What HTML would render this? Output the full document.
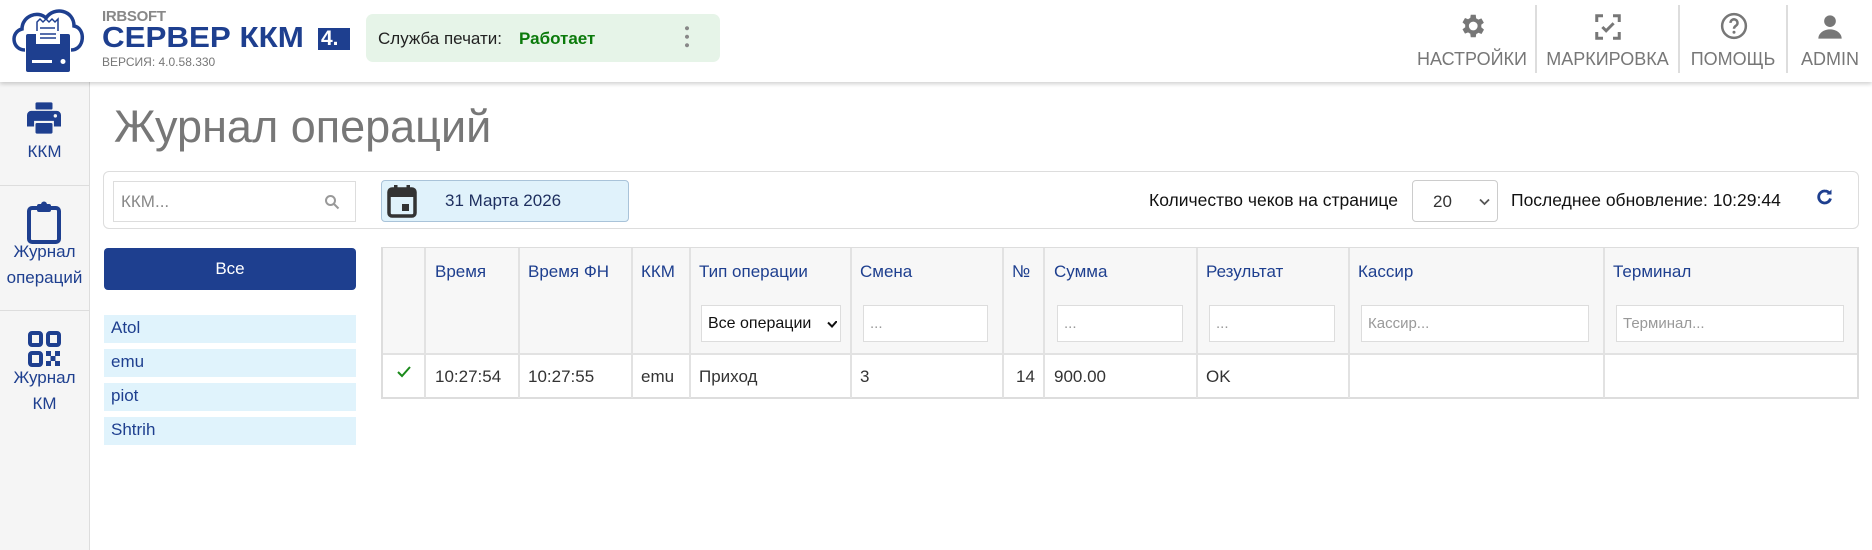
<!DOCTYPE html>
<html><head><meta charset="utf-8"><style>
*{box-sizing:border-box;margin:0;padding:0}
body{width:1872px;height:550px;overflow:hidden;background:#fff;font-family:"Liberation Sans",Arial,sans-serif;position:relative;color:#222}
.abs{position:absolute}
.hdr{left:0;top:0;width:1872px;height:82px;background:#fff;box-shadow:0 2px 4px rgba(0,0,0,.18);z-index:2}
.nav{position:absolute;top:0;height:82px;text-align:center;color:#777;font-size:18px}
.nav .lbl{position:absolute;left:0;right:0;top:49px}
.sep{position:absolute;top:5px;width:2px;height:68px;background:#ddd}
.side{left:0;top:82px;width:90px;height:468px;background:#f5f5f5;border-right:1px solid #ddd}
.sl{position:absolute;left:0;width:89px;text-align:center;color:#1e3f8f;font-size:17px;line-height:26px}
.hr{position:absolute;left:0;width:89px;height:1px;background:#ddd}
.tbl{left:381px;top:247px;width:1478px;height:152px;border:2px solid #ddd;border-top:1px solid #ddd}
.th{position:absolute;top:0;height:106px;background:#f7f7f7}
.vl{position:absolute;top:0;height:150px;width:2px;background:#e2e2e2}
.hl{color:#1e3f8f;font-size:17px;position:absolute;top:14px}
.td{position:absolute;top:119px;font-size:17px;color:#333}
.inp{position:absolute;top:57px;height:37px;border:1px solid #ddd;background:#fff;font-size:15px;color:#999;padding:9px 6px}
.li{left:104px;width:252px;height:28px;background:#e0f3fc;color:#1e3f8f;font-size:17px;padding:3px 7px}
</style></head><body>
<div class="abs hdr">
 <svg class="abs" style="left:8px;top:4px" width="78" height="70" viewBox="0 0 78 70">
  <path d="M17 46 C4 46 2 28 14 25 C14 12 30 6 38 14 C46 2 66 6 66 22 C78 24 77 46 63 46" fill="none" stroke="#1e3f8f" stroke-width="3.5"/>
  <path d="M29 18 l3 -3 l3 3 l3 -3 l3 3 l3 -3 l3 3 l3 -3 v25 h-21z" fill="#fff" stroke="#1e3f8f" stroke-width="1.5"/>
  <path d="M32 24h15M32 28h15M32 32h15M32 36h15" stroke="#1e3f8f" stroke-width="1.6"/>
  <rect x="18" y="30" width="44" height="38" rx="2" fill="#1e3f8f"/>
  <rect x="28" y="27" width="24" height="13" fill="#fff"/>
  <path d="M32 30h16M32 34h16" stroke="#1e3f8f" stroke-width="1.6"/>
  <rect x="24" y="56" width="20" height="3" fill="#fff"/><circle cx="55" cy="57.5" r="2.5" fill="#fff"/>
 </svg>
 <div class="abs" style="left:102px;top:8px;font-size:15px;font-weight:bold;color:#888;letter-spacing:-.3px">IRBSOFT</div>
 <div class="abs" style="left:102px;top:22px;font-size:29px;color:#1e3f8f;font-weight:bold;transform:scaleX(1.08);transform-origin:left">СЕРВЕР ККМ</div>
 <div class="abs" style="left:318px;top:28px;width:32px;height:22px;background:#1e3f8f;color:#fff;font-weight:bold;font-size:21px;line-height:22px;padding-left:3px">4.</div>
 <div class="abs" style="left:102px;top:55px;font-size:12px;color:#777">ВЕРСИЯ: 4.0.58.330</div>
 <div class="abs" style="left:366px;top:14px;width:354px;height:48px;background:#e6f4e8;border-radius:7px">
  <span class="abs" style="left:12px;top:15px;font-size:17px;color:#222">Служба печати:</span>
  <span class="abs" style="left:153px;top:15px;font-size:17px;color:#0b7a0b;font-weight:bold">Работает</span>
  <span class="abs" style="left:319px;top:10px;width:4px;height:26px;background:radial-gradient(circle,#888 1.8px,transparent 2.2px) 0 0/4px 8.5px"></span>
 </div>
 <div class="nav" style="left:1412px;width:120px">
  <svg class="abs" style="left:45px;top:11px" width="30" height="30" viewBox="0 0 24 24"><path fill="#777" d="M19.4 13a7.5 7.5 0 000-2l2.1-1.6-2-3.5-2.5 1a7 7 0 00-1.7-1L15 3h-4l-.4 2.6a7 7 0 00-1.7 1l-2.5-1-2 3.5L6.6 11a7.5 7.5 0 000 2l-2.2 1.6 2 3.5 2.5-1a7 7 0 001.7 1L11 21h4l.4-2.6a7 7 0 001.7-1l2.5 1 2-3.5zM13 15.5a3.5 3.5 0 110-7 3.5 3.5 0 010 7z"/></svg>
  <div class="lbl">НАСТРОЙКИ</div></div>
 <div class="sep" style="left:1535px"></div>
 <div class="nav" style="left:1537px;width:141px">
  <svg class="abs" style="left:56px;top:12px" width="30" height="30" viewBox="0 0 24 24" fill="none" stroke="#777" stroke-width="2.4"><path d="M3 8V3h5M16 3h5v5M21 16v5h-5M8 21H3v-5"/><path d="M7.5 12l3 3 6-6"/></svg>
  <div class="lbl">МАРКИРОВКА</div></div>
 <div class="sep" style="left:1678px"></div>
 <div class="nav" style="left:1680px;width:106px">
  <svg class="abs" style="left:39px;top:11px" width="30" height="30" viewBox="0 0 24 24"><circle cx="12" cy="12" r="9.5" fill="none" stroke="#777" stroke-width="2"/><path d="M9.2 9.5a2.8 2.8 0 115 1.7c-1 .9-2.2 1.3-2.2 3" fill="none" stroke="#777" stroke-width="2"/><circle cx="12" cy="17" r="1.2" fill="#777"/></svg>
  <div class="lbl">ПОМОЩЬ</div></div>
 <div class="sep" style="left:1786px"></div>
 <div class="nav" style="left:1788px;width:84px">
  <svg class="abs" style="left:28px;top:13px" width="28" height="28" viewBox="0 0 24 24" fill="#777"><circle cx="12" cy="7" r="5"/><path d="M2 22c0-5 5-8 10-8s10 3 10 8z"/></svg>
  <div class="lbl">ADMIN</div></div>
</div>
<div class="abs side">
 <svg class="abs" style="left:27px;top:20px" width="34" height="32" viewBox="0 0 24 22" fill="#1e3f8f"><rect x="6" y="0" width="12" height="5" rx="1"/><path d="M3 6h18a3 3 0 013 3v8h-5v-4H5v4H0V9a3 3 0 013-3z"/><rect x="6" y="14.5" width="12" height="7.5" rx="1"/><circle cx="20" cy="9.5" r="1.2" fill="#f5f5f5"/></svg>
 <div class="sl" style="top:57px">ККМ</div>
 <div class="hr" style="top:103px"></div>
 <svg class="abs" style="left:26px;top:119px" width="36" height="44" viewBox="0 0 36 44"><rect x="3" y="7" width="30" height="34" rx="3" fill="none" stroke="#1e3f8f" stroke-width="4"/><rect x="11" y="3" width="14" height="8" rx="2" fill="#1e3f8f"/><circle cx="18" cy="3.5" r="3" fill="#1e3f8f"/></svg>
 <div class="sl" style="top:157px">Журнал<br>операций</div>
 <div class="hr" style="top:228px"></div>
 <svg class="abs" style="left:27px;top:248px" width="34" height="40" viewBox="0 0 34 40" fill="none" stroke="#1e3f8f" stroke-width="4"><rect x="3" y="3" width="11" height="12" rx="2"/><rect x="21" y="3" width="11" height="12" rx="2"/><rect x="3" y="23" width="11" height="12" rx="2"/><g fill="#1e3f8f" stroke="none"><rect x="19" y="21" width="5" height="5"/><rect x="28" y="21" width="5" height="5"/><rect x="23.5" y="26" width="5" height="5"/><rect x="19" y="31" width="5" height="5"/><rect x="28" y="31" width="5" height="5"/></g></svg>
 <div class="sl" style="top:283px">Журнал<br>КМ</div>
</div>
<div class="abs" style="left:114px;top:101px;font-size:45px;color:#777">Журнал операций</div>
<div class="abs" style="left:103px;top:171px;width:1756px;height:58px;border:1px solid #ddd;border-radius:6px"></div>
<div class="abs" style="left:113px;top:181px;width:243px;height:41px;border:1px solid #ddd;background:#fff;font-size:17px;color:#888;padding:10px 7px">ККМ...
 <svg class="abs" style="left:210px;top:12px" width="16" height="16" viewBox="0 0 16 16" fill="none" stroke="#999" stroke-width="2"><circle cx="6.5" cy="6.5" r="4.5"/><path d="M10 10l4.5 4.5"/></svg></div>
<div class="abs" style="left:381px;top:180px;width:248px;height:42px;background:#e0f2fb;border:1px solid #a9c3d9;border-radius:4px">
 <svg class="abs" style="left:5px;top:3px" width="30" height="34" viewBox="0 0 30 34"><rect x="2" y="5" width="26" height="27" rx="3" fill="none" stroke="#333" stroke-width="3.5"/><rect x="2" y="5" width="26" height="8" fill="#333"/><rect x="7" y="1" width="3.5" height="7" fill="#333"/><rect x="19.5" y="1" width="3.5" height="7" fill="#333"/><rect x="15" y="20" width="7" height="7" fill="#333"/></svg>
 <span class="abs" style="left:63px;top:10px;font-size:17px;color:#1e2f5f">31 Марта 2026</span></div>
<div class="abs" style="left:1149px;top:190px;font-size:17.5px;color:#111">Количество чеков на странице</div>
<div class="abs" style="left:1412px;top:180px;width:86px;height:42px;border:1px solid #ccc;border-radius:4px;font-size:17px;color:#333;padding:11px 0 0 20px">20
 <svg class="abs" style="left:66px;top:17px" width="11" height="8" viewBox="0 0 11 8" fill="none" stroke="#555" stroke-width="1.8"><path d="M1 1.5l4.5 4.5 4.5-4.5"/></svg></div>
<div class="abs" style="left:1511px;top:190px;font-size:17.5px;color:#111">Последнее обновление: 10:29:44</div>
<svg class="abs" style="left:1816px;top:188px" width="18" height="18" viewBox="0 0 18 18" fill="none" stroke="#1e3f8f" stroke-width="2.8"><path d="M14.5 10.5A6 6 0 119 3c2 0 3.4.8 4.5 2"/><path d="M15.5 1.5v5h-5z" fill="#1e3f8f" stroke="none"/></svg>
<div class="abs" style="left:104px;top:248px;width:252px;height:42px;background:#1e3f8f;border-radius:4px;color:#fff;font-size:17px;text-align:center;line-height:42px">Все</div>
<div class="abs li" style="top:315px">Atol</div>
<div class="abs li" style="top:349px">emu</div>
<div class="abs li" style="top:383px">piot</div>
<div class="abs li" style="top:417px">Shtrih</div>
<div class="abs tbl">
 <div class="th" style="left:0;width:1474px"></div>
 <div class="abs" style="left:0;top:105px;width:1474px;height:2px;background:#e2e2e2"></div>
 <div class="vl" style="left:41px"></div><div class="vl" style="left:135px"></div><div class="vl" style="left:248px"></div><div class="vl" style="left:306px"></div><div class="vl" style="left:467px"></div><div class="vl" style="left:619px"></div><div class="vl" style="left:660px"></div><div class="vl" style="left:813px"></div><div class="vl" style="left:965px"></div><div class="vl" style="left:1220px"></div>
 <div class="hl" style="left:52px">Время</div><div class="hl" style="left:145px">Время ФН</div><div class="hl" style="left:258px">ККМ</div><div class="hl" style="left:316px">Тип операции</div><div class="hl" style="left:477px">Смена</div><div class="hl" style="left:629px">№</div><div class="hl" style="left:671px">Сумма</div><div class="hl" style="left:823px">Результат</div><div class="hl" style="left:975px">Кассир</div><div class="hl" style="left:1230px">Терминал</div>
 <div class="inp" style="left:318px;width:140px;color:#111;font-size:16px">Все операции<svg class="abs" style="left:125px;top:15px" width="10" height="8" viewBox="0 0 10 8" fill="none" stroke="#111" stroke-width="2"><path d="M1 1.5l4 4 8-9"/></svg></div>
 <div class="inp" style="left:480px;width:125px">...</div>
 <div class="inp" style="left:674px;width:126px">...</div>
 <div class="inp" style="left:826px;width:126px">...</div>
 <div class="inp" style="left:978px;width:228px">Кассир...</div>
 <div class="inp" style="left:1233px;width:228px">Терминал...</div>
 <svg class="abs" style="left:14px;top:118px" width="14" height="12" viewBox="0 0 14 12" fill="none" stroke="#1a8a1a" stroke-width="2"><path d="M1 6l4 4 8-9"/></svg>
 <div class="td" style="left:52px">10:27:54</div><div class="td" style="left:145px">10:27:55</div><div class="td" style="left:258px">emu</div><div class="td" style="left:316px">Приход</div><div class="td" style="left:477px">3</div><div class="td" style="left:633px">14</div><div class="td" style="left:671px">900.00</div><div class="td" style="left:823px">OK</div>
</div>
</body></html>
